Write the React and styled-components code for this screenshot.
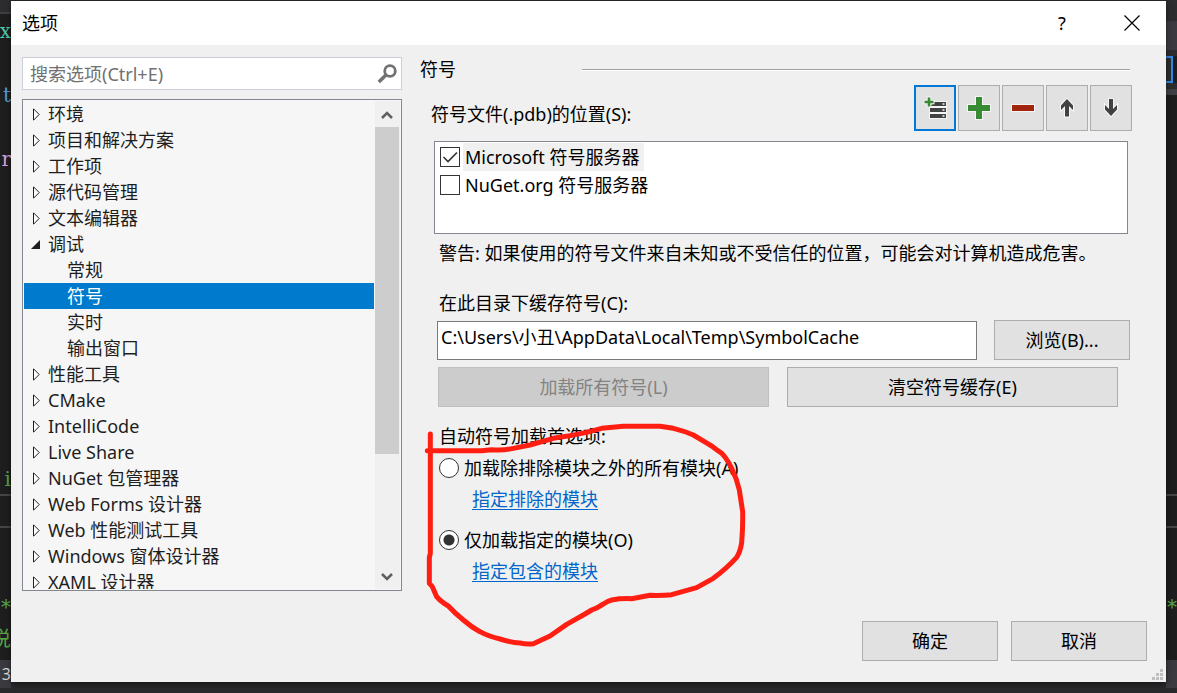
import { useState } from "react";
import styled, { createGlobalStyle } from "styled-components";

const GlobalStyle = createGlobalStyle`
  * {
    box-sizing: border-box;
  }
  body {
    margin: 0;
    background: #1e1e1e;
  }
  body, button, input {
    font-family: "Noto Sans", "Noto Sans CJK SC", sans-serif;
    font-size: 18px;
    line-height: 24px;
    color: #000;
  }
`;

const Screen = styled.div`
  display: grid;
  grid-template-columns: 11px minmax(0, 1fr) 11px;
  min-height: 100vh;
  background: #29292b;
  overflow: hidden;
`;

const EditorEdge = styled.div`
  display: flex;
  flex-direction: column;
  overflow: hidden;
  background: #1e1e1e;
`;

const EdgeBand = styled.div`
  flex: none;
  height: ${(props) => props.$height}px;
  background: ${(props) => props.$fill || "#1e1e1e"};
`;

const CodeLine = styled.div`
  flex: none;
  display: flex;
  justify-content: flex-end;
  height: 32px;
  border-bottom: 2px solid ${(props) => (props.$ruled ? "#464646" : "transparent")};
  color: ${(props) => props.$color};
  font-family: "DejaVu Serif", "Noto Sans CJK SC", serif;
  font-size: 20px;
  line-height: 30px;
`;

const StatusEdge = styled.div`
  flex: none;
  display: flex;
  justify-content: flex-end;
  height: 28px;
  background: #3a3a3f;
  color: #dcdcdc;
  font-size: 16px;
  line-height: 28px;
`;

const ActiveTool = styled.div`
  flex: none;
  height: 27px;
  width: 7px;
  border: 2px solid #2f8ae5;
  border-left: none;
  background: #2d2d30;
`;

const Dialog = styled.main`
  position: relative;
  align-self: start;
  margin-top: 1px;
  background: #f0f0f0;
  box-shadow: 0 2px 6px rgba(0, 0, 0, 0.5);
`;

const TitleBar = styled.header`
  display: flex;
  align-items: center;
  height: 44px;
  padding: 0 11px;
  background: #fff;
`;

const Title = styled.h1`
  flex: 1;
  margin: 0;
  font-size: 18px;
  font-weight: 400;
`;

const TitleButton = styled.button`
  display: flex;
  align-items: center;
  justify-content: center;
  width: 46px;
  height: 44px;
  margin-left: 24px;
  padding: 0;
  border: none;
  background: none;
`;

const Body = styled.div`
  display: grid;
  grid-template-columns: 380px minmax(0, 1fr);
  gap: 18px;
  padding: 12px 34px 0 11px;
`;

const Sidebar = styled.nav`
  display: flex;
  flex-direction: column;
  gap: 9px;
`;

const SearchBox = styled.label`
  display: flex;
  align-items: center;
  height: 33px;
  padding: 0 4px 0 7px;
  border: 1px solid #ccceda;
  background: #fff;
`;

const SearchInput = styled.input`
  flex: 1;
  min-width: 0;
  padding: 0;
  border: none;
  outline: none;
  background: none;
  &::placeholder {
    color: #717171;
    opacity: 1;
  }
`;

const TreeFrame = styled.div`
  display: flex;
  height: 492px;
  padding: 1px;
  border: 1px solid #828790;
  background: #f6f6f6;
`;

const Tree = styled.ul`
  flex: 1;
  margin: 0;
  padding: 0;
  list-style: none;
  overflow: hidden;
`;

const TreeRow = styled.li`
  display: flex;
  align-items: center;
  gap: 8px;
  height: 26px;
  padding-left: ${(props) => (props.$child ? 43 : 0)}px;
  background: ${(props) => (props.$selected ? "#007acc" : "transparent")};
  color: ${(props) => (props.$selected ? "#fff" : "#1e1e1e")};
  white-space: nowrap;
  cursor: default;
`;

const Toggle = styled.span`
  display: flex;
  justify-content: flex-end;
  width: 16px;
`;

const ScrollBar = styled.div`
  display: flex;
  flex-direction: column;
  width: 25px;
  margin-left: 1px;
  background: #f0f0f0;
`;

const ScrollButton = styled.button`
  display: flex;
  align-items: center;
  justify-content: center;
  width: 24px;
  height: 26px;
  padding: 2px 0 0;
  border: none;
  background: none;
`;

const ScrollTrack = styled.div`
  flex: 1;
`;

const ScrollThumb = styled.div`
  width: 24px;
  height: 75%;
  background: #cdcdcd;
`;

const Page = styled.section`
  display: flex;
  flex-direction: column;
`;

const PageHeading = styled.div`
  display: flex;
  align-items: center;
  height: 24px;
  margin-right: 2px;
`;

const PageTitle = styled.h2`
  width: 162px;
  margin: 0;
  font-size: 18px;
  font-weight: 400;
`;

const Rule = styled.div`
  flex: 1;
  height: 1px;
  background: #a0a0a0;
  box-shadow: 0 1px #fff;
`;

const LocationsBar = styled.div`
  display: flex;
  align-items: flex-end;
  justify-content: space-between;
  margin-top: 4px;
  padding-left: 11px;
`;

const LocationsLabel = styled.span`
  line-height: 34px;
`;

const Tools = styled.div`
  display: flex;
  gap: 2px;
`;

const ToolButton = styled.button`
  display: flex;
  align-items: center;
  justify-content: center;
  width: 42px;
  height: 46px;
  padding: 0;
  border: ${(props) => (props.$active ? "2px solid #0078d7" : "1px solid #adadad")};
  background: #e1e1e1;
`;

const ServerList = styled.div`
  height: 93px;
  margin: 10px 4px 0 14px;
  padding: 1px 5px;
  border: 1px solid #828790;
  background: #fff;
`;

const ServerRow = styled.label`
  display: flex;
  align-items: center;
  gap: 3px;
  height: 28px;
`;

const CheckBox = styled.input.attrs({ type: "checkbox" })`
  appearance: none;
  width: 20px;
  height: 20px;
  margin: 0;
  border: 1px solid #333;
  background: #fff;
  &:checked {
    background: #fff
      url("data:image/svg+xml,%3Csvg xmlns='http://www.w3.org/2000/svg' viewBox='0 0 18 18'%3E%3Cpath d='M2.5 9l4.5 4.5L16 4.5' fill='none' stroke='%23333' stroke-width='1.6'/%3E%3C/svg%3E");
  }
`;

const ServerName = styled.span`
  padding: 2px 5px 2px 2px;
  background: ${(props) => (props.$current ? "#f0f0f0" : "transparent")};
`;

const Warning = styled.p`
  margin: 7px 0 0;
  padding-left: 19px;
`;

const FieldLabel = styled.label`
  margin-top: 26px;
  padding-left: 19px;
`;

const PathRow = styled.div`
  display: flex;
  align-items: flex-end;
  gap: 17px;
  margin: 5px 2px 0 17px;
`;

const PathInput = styled.input`
  flex: 1;
  min-width: 0;
  height: 39px;
  padding: 0 3px 10px;
  border: 1px solid #7a7a7a;
  background: #fff;
`;

const PushButton = styled.button`
  width: 136px;
  height: 40px;
  padding: 0;
  border: 1px solid #adadad;
  background: #e1e1e1;
  &:disabled {
    border-color: #bfbfbf;
    background: #ccc;
    color: #838383;
  }
`;

const CacheActions = styled.div`
  display: grid;
  grid-template-columns: 1fr 1fr;
  gap: 18px;
  margin: 7px 14px 0 18px;
  ${PushButton} {
    width: auto;
  }
`;

const Preferences = styled.fieldset`
  position: relative;
  display: flex;
  flex-direction: column;
  align-items: flex-start;
  margin: 17px 0 0;
  padding: 0 0 0 19px;
  border: none;
`;

const Legend = styled.legend`
  padding: 0;
`;

const RadioRow = styled.label`
  display: flex;
  align-items: center;
  gap: 5px;
  margin-top: ${(props) => (props.$first ? 8 : 17)}px;
`;

const Radio = styled.input.attrs({ type: "radio" })`
  appearance: none;
  width: 20px;
  height: 20px;
  margin: 0;
  border: 1px solid #333;
  border-radius: 50%;
  background: #fff;
  &:checked {
    background: radial-gradient(circle, #333 5px, #fff 6px);
  }
`;

const ModuleLink = styled.a`
  margin: 7px 0 0 33px;
  color: #0066cc;
  text-decoration: underline;
  text-decoration-thickness: 1px;
  text-underline-offset: 3px;
`;

const Marker = styled.svg`
  position: absolute;
  top: -28px;
  left: 0;
  width: 340px;
  height: 273px;
  pointer-events: none;
`;

const Footer = styled.footer`
  display: flex;
  justify-content: flex-end;
  gap: 13px;
  padding: 30px 19px 21px;
`;

const Grip = styled.svg`
  position: absolute;
  right: 3px;
  bottom: 2px;
`;

const treeItems = [
  { label: "环境" },
  { label: "项目和解决方案" },
  { label: "工作项" },
  { label: "源代码管理" },
  { label: "文本编辑器" },
  { label: "调试", open: true },
  { label: "常规", child: true },
  { label: "符号", child: true },
  { label: "实时", child: true },
  { label: "输出窗口", child: true },
  { label: "性能工具" },
  { label: "CMake" },
  { label: "IntelliCode" },
  { label: "Live Share" },
  { label: "NuGet 包管理器" },
  { label: "Web Forms 设计器" },
  { label: "Web 性能测试工具" },
  { label: "Windows 窗体设计器" },
  { label: "XAML 设计器" },
];

const leftCode = {
  0: { text: "x", color: "#4ec9b0" },
  2: { text: "t", color: "#569cd6" },
  4: { text: "r", color: "#d8a0df" },
  14: { text: "i", color: "#57a64a", ruled: true },
  15: { ruled: true },
  18: { text: "*", color: "#57a64a" },
  19: { text: "说", color: "#57a64a" },
};

const rightCode = {
  11: { ruled: true },
  12: { ruled: true },
  15: { text: "*", color: "#57a64a" },
};

const CodeLines = ({ count, lines }) =>
  Array.from({ length: count }, (_, i) => {
    const line = lines[i] || {};
    return (
      <CodeLine key={i} $color={line.color} $ruled={line.ruled}>
        {line.text}
      </CodeLine>
    );
  });

const SearchIcon = () => (
  <svg width="20" height="20" viewBox="0 0 20 20" fill="none" stroke="#717171">
    <circle cx="13" cy="7" r="5.3" strokeWidth="2.8" />
    <path d="M9.2 10.8L1.8 18" strokeWidth="3.6" />
  </svg>
);

const ToggleIcon = ({ open }) =>
  open ? (
    <svg width="9" height="9" viewBox="0 0 9 9">
      <path d="M9 0V9H0Z" fill="#1e1e1e" />
    </svg>
  ) : (
    <svg width="7" height="13" viewBox="0 0 7 13">
      <path d="M.5 .8L6.2 6.5L.5 12.2Z" fill="#fff" stroke="#1e1e1e" />
    </svg>
  );

const ScrollArrow = ({ down }) => (
  <svg width="12" height="10" viewBox="0 0 12 10" fill="none" stroke="#606060" strokeWidth="2.6">
    <path d={down ? "M1 2L6 7L11 2" : "M1 8L6 3L11 8"} />
  </svg>
);

const toolShapes = {
  server: (
    <>
      <path
        d="M9.5 6H23V10H7.5V8.5H9.5ZM7 12H23V16H7ZM7 18H23V22H7Z"
        fill="#424242"
        stroke="#f5f5f5"
        strokeWidth="2"
        paintOrder="stroke"
      />
      <path d="M19.5 7.2H21.5V8.8H19.5ZM19.5 13.2H21.5V14.8H19.5ZM19.5 19.2H21.5V20.8H19.5Z" fill="#f5f5f5" />
      <path
        d="M4.7 1.5H7.3V4.7H10.5V7.3H7.3V10.5H4.7V7.3H1.5V4.7H4.7Z"
        fill="#388a34"
        stroke="#f5f5f5"
        strokeWidth="2"
        paintOrder="stroke"
      />
    </>
  ),
  add: <path d="M9 1H15V9H23V15H15V23H9V15H1V9H9Z" fill="#388a34" />,
  remove: <path d="M1 9H23V15H1Z" fill="#a1260d" />,
  up: <path d="M12 3L18 9.5V14L14 10V20.5H10V10L6 14V9.5Z" fill="#424242" />,
  down: <path d="M12 20L18 13.5V9L14 13V3H10V13L6 9V13.5Z" fill="#424242" />,
};

const ToolIcon = ({ name }) => (
  <svg
    width="24"
    height="24"
    viewBox="0 0 24 24"
    overflow="visible"
    stroke="#f5f5f5"
    strokeWidth="2"
    paintOrder="stroke"
  >
    {name === "server" ? <g stroke="none">{toolShapes.server}</g> : toolShapes[name]}
  </svg>
);

const App = () => {
  const [selected, setSelected] = useState("符号");
  const [servers, setServers] = useState({ ms: true, nuget: false });
  const [mode, setMode] = useState("include");

  return (
    <Screen>
      <GlobalStyle />
      <EditorEdge aria-hidden="true">
        <EdgeBand $height={12} $fill="#2d2d30" />
        <EdgeBand $height={2} $fill="#3f3f42" />
        <EdgeBand $height={2} />
        <CodeLines count={20} lines={leftCode} />
        <EdgeBand $height={4} />
        <StatusEdge>3</StatusEdge>
        <EdgeBand $height={5} $fill="#29292b" />
      </EditorEdge>

      <Dialog>
        <TitleBar>
          <Title>选项</Title>
          <TitleButton aria-label="帮助">?</TitleButton>
          <TitleButton aria-label="关闭">
            <svg width="16" height="16" viewBox="0 0 16 16" stroke="#000" strokeWidth="1.2">
              <path d="M.5 .5L15.5 15.5M15.5 .5L.5 15.5" />
            </svg>
          </TitleButton>
        </TitleBar>

        <Body>
          <Sidebar>
            <SearchBox>
              <SearchInput placeholder="搜索选项(Ctrl+E)" aria-label="搜索选项" />
              <SearchIcon />
            </SearchBox>
            <TreeFrame>
              <Tree>
                {treeItems.map((item) => (
                  <TreeRow
                    key={item.label}
                    $child={item.child}
                    $selected={item.label === selected}
                    onClick={() => setSelected(item.label)}
                  >
                    {!item.child && (
                      <Toggle>
                        <ToggleIcon open={item.open} />
                      </Toggle>
                    )}
                    {item.label}
                  </TreeRow>
                ))}
              </Tree>
              <ScrollBar>
                <ScrollButton aria-label="向上滚动">
                  <ScrollArrow />
                </ScrollButton>
                <ScrollTrack>
                  <ScrollThumb />
                </ScrollTrack>
                <ScrollButton aria-label="向下滚动">
                  <ScrollArrow down />
                </ScrollButton>
              </ScrollBar>
            </TreeFrame>
          </Sidebar>

          <Page>
            <PageHeading>
              <PageTitle>符号</PageTitle>
              <Rule />
            </PageHeading>
            <LocationsBar>
              <LocationsLabel>符号文件(.pdb)的位置(S):</LocationsLabel>
              <Tools>
                <ToolButton $active aria-label="新建服务器">
                  <ToolIcon name="server" />
                </ToolButton>
                <ToolButton aria-label="添加">
                  <ToolIcon name="add" />
                </ToolButton>
                <ToolButton aria-label="移除">
                  <ToolIcon name="remove" />
                </ToolButton>
                <ToolButton aria-label="上移">
                  <ToolIcon name="up" />
                </ToolButton>
                <ToolButton aria-label="下移">
                  <ToolIcon name="down" />
                </ToolButton>
              </Tools>
            </LocationsBar>
            <ServerList>
              <ServerRow>
                <CheckBox
                  checked={servers.ms}
                  onChange={(e) => setServers({ ...servers, ms: e.target.checked })}
                />
                <ServerName $current>Microsoft 符号服务器</ServerName>
              </ServerRow>
              <ServerRow>
                <CheckBox
                  checked={servers.nuget}
                  onChange={(e) => setServers({ ...servers, nuget: e.target.checked })}
                />
                <ServerName>NuGet.org 符号服务器</ServerName>
              </ServerRow>
            </ServerList>
            <Warning>警告: 如果使用的符号文件来自未知或不受信任的位置，可能会对计算机造成危害。</Warning>

            <FieldLabel htmlFor="cache">在此目录下缓存符号(C):</FieldLabel>
            <PathRow>
              <PathInput id="cache" defaultValue="C:\Users\小丑\AppData\Local\Temp\SymbolCache" />
              <PushButton>浏览(B)...</PushButton>
            </PathRow>
            <CacheActions>
              <PushButton disabled>加载所有符号(L)</PushButton>
              <PushButton>清空符号缓存(E)</PushButton>
            </CacheActions>

            <Preferences>
              <Legend>自动符号加载首选项:</Legend>
              <RadioRow $first>
                <Radio name="mode" checked={mode === "exclude"} onChange={() => setMode("exclude")} />
                加载除排除模块之外的所有模块(A)
              </RadioRow>
              <ModuleLink href="#exclude">指定排除的模块</ModuleLink>
              <RadioRow>
                <Radio name="mode" checked={mode === "include"} onChange={() => setMode("include")} />
                仅加载指定的模块(O)
              </RadioRow>
              <ModuleLink href="#include">指定包含的模块</ModuleLink>
              {/* red pen stroke round the preferences */}
              <Marker
                viewBox="0 0 1020 819"
                fill="none"
                stroke="#ff1f12"
                strokeWidth="15"
                strokeLinecap="round"
                strokeLinejoin="round"
              >
                <path d="M31 42V400L28 412V490L37 500L50 530Q62 545 85 558Q105 580 130 600Q155 622 180 635Q205 649 240 657Q275 668 300 669Q320 673 340 671L390 648L440 613L495 582L515 570L532 563L550 552Q563 543 575 540Q600 535 635 536L690 526Q730 527 755 524L830 503L880 475Q920 445 950 412Q961 395 965 368Q969 320 968 275L958 210Q950 175 935 145Q920 115 905 100L890 89L875 78L862 70L820 45Q790 32 760 25L720 19H610L545 25L500 37Q450 48 400 55L330 75L280 85Q250 92 215 89L185 92H22" />
              </Marker>
            </Preferences>
          </Page>
        </Body>

        <Footer>
          <PushButton>确定</PushButton>
          <PushButton>取消</PushButton>
        </Footer>
        <Grip width="11" height="11" viewBox="0 0 11 11" fill="#bfbfbf">
          <path d="M8 0h3v3h-3zM4 4h3v3h-3zM8 4h3v3h-3zM0 8h3v3h-3zM4 8h3v3h-3zM8 8h3v3h-3z" />
        </Grip>
      </Dialog>

      <EditorEdge aria-hidden="true">
        <EdgeBand $height={21} $fill="#2d2d30" />
        <EdgeBand $height={29} $fill="#3a3a40" />
        <EdgeBand $height={6} $fill="#2d2d30" />
        <ActiveTool />
        <EdgeBand $height={6} $fill="#2d2d30" />
        <EdgeBand $height={6} $fill="#3f3f46" />
        <EdgeBand $height={17} />
        <CodeLines count={17} lines={rightCode} />
        <EdgeBand $height={4} />
        <StatusEdge />
        <EdgeBand $height={5} $fill="#29292b" />
      </EditorEdge>
    </Screen>
  );
};

export default App;
